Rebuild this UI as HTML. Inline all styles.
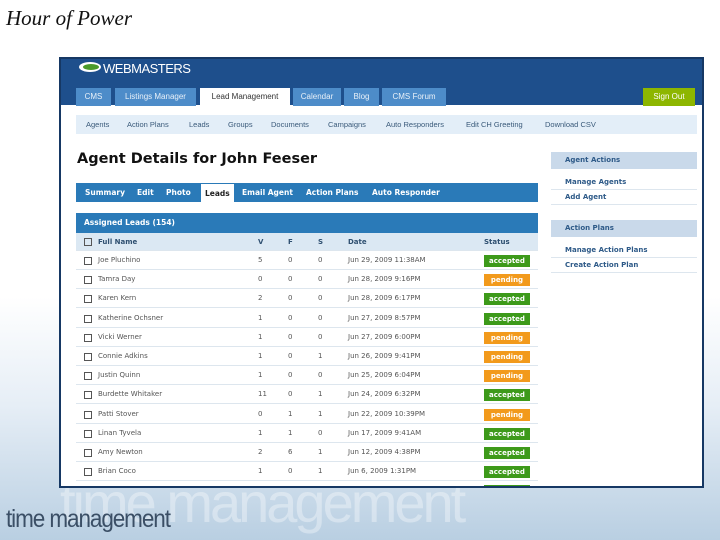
<!DOCTYPE html>
<html><head><meta charset="utf-8"><style>
*{margin:0;padding:0;box-sizing:border-box}
body{width:720px;height:540px;overflow:hidden;position:relative;font-family:"DejaVu Sans","Liberation Sans",sans-serif;background:linear-gradient(180deg,#fff 0%,#fff 55%,#e6eef6 75%,#b9cfe2 100%)}
.abs{position:absolute}
.title{left:6px;top:6px;font:italic 21px "Liberation Serif",serif;color:#111}
.frame{left:59px;top:57px;width:645px;height:431px;background:#fff;border:2px solid #163864;overflow:hidden}
.hdr{left:0;top:0;width:641px;height:46px;background:#1e4f8c}
.logo{left:18px;top:2px;color:#fff;font:13px "Liberation Sans",sans-serif;letter-spacing:-0.5px}
.tab{top:29px;height:18px;background:#4d8cc9;color:#e8f0f8;font:8px "Liberation Sans",sans-serif;text-align:center;line-height:18px}
.sub{left:15px;top:56px;width:621px;height:19px;background:#e3eef8;font:7.5px "Liberation Sans",sans-serif;color:#3a5a7a;line-height:19px}
.sub span{position:absolute}
h1{position:absolute;left:16px;top:92px;font:bold 14.5px "DejaVu Sans",sans-serif;color:#111}
.bar{left:15px;width:462px;background:#2a7ab8;color:#fff;font:bold 7.5px "DejaVu Sans",sans-serif}
.bar span{position:absolute;top:0}
.row{left:15px;width:462px;height:19px;border-bottom:1px solid #dde6ee;font:7px "DejaVu Sans",sans-serif;color:#555;line-height:19px}
.row span{position:absolute}
.cb{width:8px;height:8px;border:1px solid #555;top:6px}
.b{top:4px;width:46px;height:12px;text-align:center;color:#fff;font:bold 7px "DejaVu Sans",sans-serif;line-height:12px}
.acc{background:#3d9a1a}.pen{background:#f29a1c}
.side{left:490px;width:146px;font:bold 7px "DejaVu Sans",sans-serif;color:#2e5a88}
.sh{background:#c9d9ea;height:17px;line-height:17px;padding-left:14px}
.sl{height:15px;line-height:15px;padding-left:14px;border-bottom:1px solid #dde6ee}
.tm{left:6px;top:505px;font:25px "Liberation Sans",sans-serif;color:#3b4f66;letter-spacing:-1.2px;transform:scaleX(0.9);transform-origin:left}
.big{left:60px;top:470px;font:56px "Liberation Sans",sans-serif;color:rgba(255,255,255,0.35);letter-spacing:-3px}
</style></head><body>
<div class="abs big">time management</div>
<div class="abs title">Hour of Power</div>
<div class="abs tm">time management</div>
<div class="abs frame">
 <div class="abs hdr">
  <svg class="abs" style="left:16px;top:2px" width="26" height="12"><ellipse cx="13" cy="6" rx="11" ry="5" fill="#fff"/><ellipse cx="14" cy="6" rx="8" ry="3" fill="#4a9a2a"/></svg>
  <div class="abs logo" style="left:42px">WEBMASTERS</div>
 </div>
 <div class="abs tab" style="left:15px;width:35px">CMS</div>
 <div class="abs tab" style="left:54px;width:81px">Listings Manager</div>
 <div class="abs tab" style="left:139px;width:90px;background:#fff;color:#333;height:19px">Lead Management</div>
 <div class="abs tab" style="left:232px;width:48px">Calendar</div>
 <div class="abs tab" style="left:283px;width:35px">Blog</div>
 <div class="abs tab" style="left:321px;width:64px">CMS Forum</div>
 <div class="abs tab" style="left:582px;width:52px;background:#8db600;color:#fff">Sign Out</div>
 <div class="abs sub"><span style="left:10px">Agents</span><span style="left:51px">Action Plans</span><span style="left:113px">Leads</span><span style="left:152px">Groups</span><span style="left:195px">Documents</span><span style="left:252px">Campaigns</span><span style="left:310px">Auto Responders</span><span style="left:390px">Edit CH Greeting</span><span style="left:469px">Download CSV</span></div>
 <h1>Agent Details for John Feeser</h1>
 <div class="abs bar" style="top:124px;height:19px;line-height:19px"><span style="left:9px">Summary</span><span style="left:61px">Edit</span><span style="left:90px">Photo</span><span style="left:125px;top:1px;background:#fff;color:#222;padding:0 4px;height:18px">Leads</span><span style="left:166px">Email Agent</span><span style="left:230px">Action Plans</span><span style="left:296px">Auto Responder</span></div>
 <div class="abs bar" style="top:154px;height:20px;line-height:20px"><span style="left:8px">Assigned Leads (154)</span></div>
 <div class="abs row" style="top:174px;height:18px;line-height:18px;background:#dbe8f3;color:#2e4f70;font-weight:bold"><span class="cb" style="left:8px;top:5px"></span><span style="left:22px">Full Name</span><span style="left:182px">V</span><span style="left:212px">F</span><span style="left:242px">S</span><span style="left:272px">Date</span><span style="left:408px">Status</span></div>
 <div id="rows"></div>
 <div class="abs side" style="top:93px"><div class="sh">Agent Actions</div><div style="height:6px"></div><div class="sl">Manage Agents</div><div class="sl">Add Agent</div></div>
 <div class="abs side" style="top:161px"><div class="sh">Action Plans</div><div style="height:6px"></div><div class="sl">Manage Action Plans</div><div class="sl">Create Action Plan</div></div>
</div>
<script>
var d=[["Joe Pluchino",5,0,0,"Jun 29, 2009 11:38AM","a"],["Tamra Day",0,0,0,"Jun 28, 2009 9:16PM","p"],["Karen Kern",2,0,0,"Jun 28, 2009 6:17PM","a"],["Katherine Ochsner",1,0,0,"Jun 27, 2009 8:57PM","a"],["Vicki Werner",1,0,0,"Jun 27, 2009 6:00PM","p"],["Connie Adkins",1,0,1,"Jun 26, 2009 9:41PM","p"],["Justin Quinn",1,0,0,"Jun 25, 2009 6:04PM","p"],["Burdette Whitaker",11,0,1,"Jun 24, 2009 6:32PM","a"],["Patti Stover",0,1,1,"Jun 22, 2009 10:39PM","p"],["Linan Tyvela",1,1,0,"Jun 17, 2009 9:41AM","a"],["Amy Newton",2,6,1,"Jun 12, 2009 4:38PM","a"],["Brian Coco",1,0,1,"Jun 6, 2009 1:31PM","a"],["",0,0,0,"","a"]];
var h="";d.forEach(function(r,i){var t=192+i*19.2;h+='<div class="abs row" style="top:'+t+'px">'+(r[0]?'<span class="cb" style="left:8px"></span><span style="left:22px">'+r[0]+'</span><span style="left:182px">'+r[1]+'</span><span style="left:212px">'+r[2]+'</span><span style="left:242px">'+r[3]+'</span><span style="left:272px">'+r[4]+'</span>':'')+'<span class="b '+(r[5]=="a"?"acc":"pen")+'" style="left:408px">'+(r[0]?(r[5]=="a"?"accepted":"pending"):"")+'</span></div>'});
document.getElementById("rows").innerHTML=h;
</script>
</body></html>
